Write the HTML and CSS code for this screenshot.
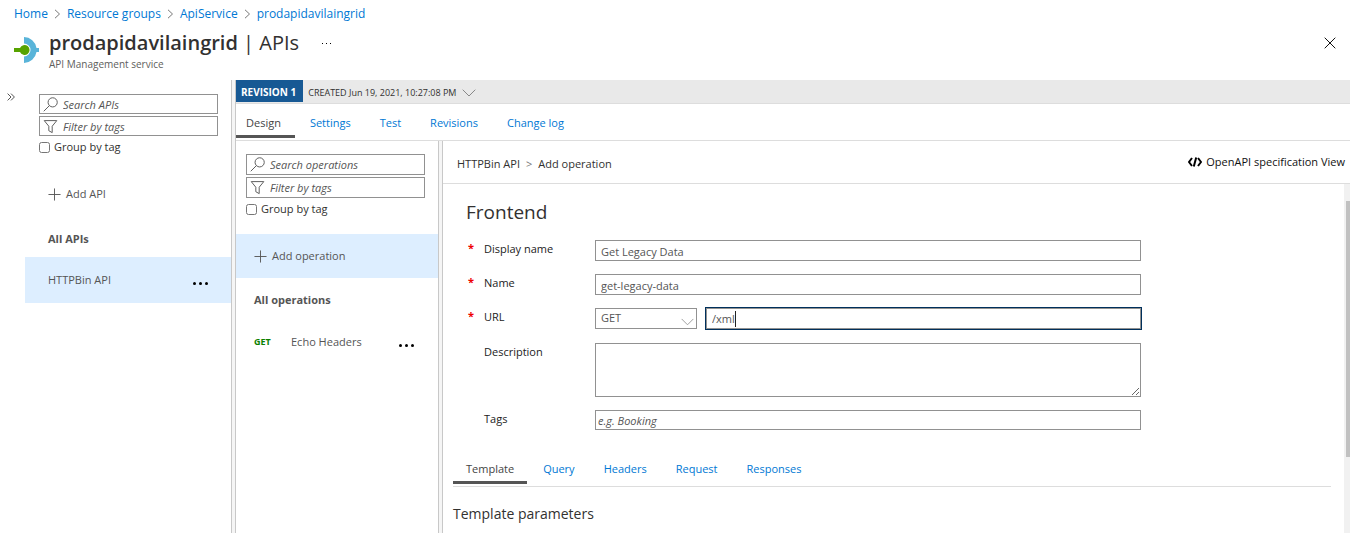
FILE: index.html
```html
<!DOCTYPE html>
<html lang="en">
<head>
<meta charset="utf-8">
<title>prodapidavilaingrid | APIs</title>
<link rel="stylesheet" href="styles.css">
</head>
<body>
<svg class="defs" aria-hidden="true">
  <symbol id="search" viewBox="0 0 16 16"><circle cx="10.300" cy="5.700" r="4.900"/><path d="M6.800 9.200.8 15.200"/></symbol>
  <symbol id="filter" viewBox="0 0 16 16"><path d="M1.300 1.700h13.400L9.800 7.700v6.800L6.200 12.500V7.700z"/></symbol>
  <symbol id="plus" viewBox="0 0 14 14"><path d="M7 .5v13M.5 7h13"/></symbol>
  <symbol id="chevron" viewBox="0 0 14 8"><path d="M.7.7 7 7 13.300.7"/></symbol>
  <symbol id="sep" viewBox="0 0 7 10"><path d="M1 .8 5.500 5 1 9.200"/></symbol>
</svg>
<header class="header">
  <nav class="crumbs" aria-label="Breadcrumb">
    <a href="#">Home</a><svg class="sep"><use href="#sep"/></svg>
    <a href="#">Resource groups</a><svg class="sep"><use href="#sep"/></svg>
    <a href="#">ApiService</a><svg class="sep"><use href="#sep"/></svg>
    <a href="#">prodapidavilaingrid</a>
  </nav>
  <div class="title-row">
    <svg class="logo" viewBox="0 0 26 28"><path d="M10 1a13 13 0 0 1 12.500 11H25v4h-2.500A13 13 0 0 1 10 27v-6.500a6.500 6.500 0 0 0 0-13z" fill="#59b4d9"/><path d="M0 12h6a5 5 0 1 1 0 4H0z" fill="#57a300"/></svg>
    <div class="heading">
      <h1 class="title"><strong>prodapidavilaingrid</strong> | APIs</h1>
      <p class="subtitle">API Management service</p>
    </div>
    <button class="more-title" aria-label="More"><span class="dots small"><i></i><i></i><i></i></span></button>
    <button class="close" aria-label="Close"><svg viewBox="0 0 12 12"><path d="M.7.7l10.600 10.600M11.300.7.7 11.300"/></svg></button>
  </div>
</header>
<div class="body">
  <button class="expand" aria-label="Expand menu"><svg viewBox="0 0 8 8"><path d="M.6.6 4 4 .6 7.400M4 .6 7.400 4 4 7.400"/></svg></button>
  <aside class="apis">
    <div class="filters">
      <label class="box"><svg><use href="#search"/></svg><input type="text" placeholder="Search APIs" aria-label="Search APIs"></label>
      <label class="box"><svg><use href="#filter"/></svg><input type="text" placeholder="Filter by tags" aria-label="Filter by tags"></label>
      <label class="check"><input type="checkbox">Group by tag</label>
    </div>
    <button class="row add"><svg><use href="#plus"/></svg>Add API</button>
    <h2 class="row group">All APIs</h2>
    <div class="row selected"><a href="#">HTTPBin API</a><button aria-label="API actions"><span class="dots"><i></i><i></i><i></i></span></button></div>
  </aside>
  <div class="splitter"></div>
  <main class="main">
    <div class="revision"><span class="badge">REVISION 1</span><button class="created">CREATED Jun 19, 2021, 10:27:08 PM<svg><use href="#chevron"/></svg></button></div>
    <nav class="tabs">
      <a class="tab active" href="#">Design</a><a class="tab" href="#">Settings</a><a class="tab" href="#">Test</a><a class="tab" href="#">Revisions</a><a class="tab" href="#">Change log</a>
    </nav>
    <div class="work">
      <aside class="operations">
        <div class="filters">
          <label class="box"><svg><use href="#search"/></svg><input type="text" placeholder="Search operations" aria-label="Search operations"></label>
          <label class="box"><svg><use href="#filter"/></svg><input type="text" placeholder="Filter by tags" aria-label="Filter operations by tags"></label>
          <label class="check"><input type="checkbox">Group by tag</label>
        </div>
        <button class="row add current"><svg><use href="#plus"/></svg>Add operation</button>
        <h2 class="row group">All operations</h2>
        <div class="row operation"><span class="verb">GET</span><a href="#">Echo Headers</a><button aria-label="Operation actions"><span class="dots"><i></i><i></i><i></i></span></button></div>
      </aside>
      <div class="splitter"></div>
      <section class="editor">
        <div class="editor-head">
          <div class="path"><a href="#">HTTPBin API</a><span class="gt">&gt;</span><span>Add operation</span></div>
          <button class="openapi"><svg viewBox="0 0 14 10"><path d="M4 1 1 5l3 4M10 1l3 4-3 4M8.200.5 5.800 9.500"/></svg>OpenAPI specification View</button>
        </div>
        <div class="scroll">
          <div class="content">
            <h2 class="section">Frontend</h2>
            <form class="form">
              <span class="req">*</span><label for="display">Display name</label><input class="field" id="display" type="text" value="Get Legacy Data">
              <span class="req">*</span><label for="name">Name</label><input class="field" id="name" type="text" value="get-legacy-data">
              <span class="req">*</span><label for="url">URL</label>
              <div class="url">
                <div class="method"><select class="field" aria-label="Method"><option>GET</option></select><svg><use href="#chevron"/></svg></div>
                <div class="field focused"><input id="url" type="text" value="/xml"><span class="caret"></span></div>
              </div>
              <span></span><label for="description">Description</label><textarea class="field area" id="description"></textarea>
              <span></span><label for="tags">Tags</label><input class="field tags" id="tags" type="text" placeholder="e.g. Booking">
            </form>
            <nav class="tabs inner">
              <a class="tab active" href="#">Template</a><a class="tab" href="#">Query</a><a class="tab" href="#">Headers</a><a class="tab" href="#">Request</a><a class="tab" href="#">Responses</a>
            </nav>
            <h3 class="params">Template parameters</h3>
          </div>
          <div class="track"><div class="thumb"></div></div>
        </div>
      </section>
    </div>
  </main>
</div>
</body>
</html>
```
FILE: styles.css
```css
* { box-sizing: border-box; }
html, body { height: 100%; }
body {
  margin: 0;
  display: flex;
  flex-direction: column;
  overflow: hidden;
  background: #fff;
  color: #323130;
  font: 11px/16px "Open Sans", "Noto Sans", sans-serif;
}
h1, h2, h3, p { margin: 0; font-weight: 400; }
a { color: #0078d4; text-decoration: none; }
button { border: 0; padding: 0; background: none; color: inherit; font: inherit; text-align: left; }
input, select, textarea { font: inherit; color: #555; }
svg { fill: none; stroke: #555; flex: none; }
.defs { position: absolute; width: 0; height: 0; }

.header { flex: none; height: 80px; padding: 6px 14px 0; }
.crumbs { display: flex; align-items: center; font-size: 12px; }
.sep { width: 7px; height: 10px; margin: 0 6px; stroke: #777; }
.title-row { display: flex; padding-top: 7px; }
.logo { width: 26px; height: 28px; margin: 7px 9px 0 0; stroke: none; }
.title { font-size: 20px; line-height: 28px; }
.title strong { font-weight: 600; }
.subtitle { color: #605e5c; font-size: 10px; line-height: 14px; }
.more-title { align-self: flex-start; margin: 14px 0 0 23px; display: flex; }
.close { align-self: flex-start; margin: 8px 0 0 auto; }
.close svg { display: block; width: 12px; height: 12px; stroke: #111; }

.dots { display: flex; gap: 3px; }
.dots i { width: 3px; height: 3px; border-radius: 50%; background: #000; }
.dots.small i { width: 1px; height: 1px; border-radius: 0; }

.body { flex: 1; min-height: 0; display: flex; }
.expand { align-self: flex-start; width: 25px; padding: 13px 0 0 7px; }
.expand svg { display: block; width: 8px; height: 8px; }
.apis { flex: none; width: 206px; }
.splitter { flex: none; width: 5px; border: solid #c8c8c8; border-width: 0 1px; background: #f5f5f5; }
.filters { display: flex; flex-direction: column; gap: 2px; padding: 14px 13px 0 14px; }
.box { display: flex; align-items: center; height: 20px; border: 1px solid #919191; padding-left: 3px; }
.box svg { width: 15px; height: 15px; }
.box input { flex: 1; min-width: 0; border: 0; outline: 0; padding: 1px 0 0 5px; background: none; }
input::placeholder { color: #555; font-style: italic; opacity: 1; }
.check { display: flex; align-items: center; gap: 4px; line-height: 18px; }
.check input { width: 11px; height: 11px; margin: 0; }
.row { display: flex; align-items: center; width: 100%; height: 46px; padding: 0 23px; color: #555; font-size: 11px; }
.row a { color: inherit; }
.add { gap: 5px; margin-top: 15px; }
.add svg { width: 13px; height: 13px; }
.group { font-weight: 700; height: 44px; }
.apis .group { height: 40px; padding-top: 4px; }
.selected { background: #def; }
.row button { margin: 7px 0 0 auto; }

.main { flex: 1; min-width: 0; display: flex; flex-direction: column; }
.revision { flex: none; display: flex; height: 24px; background: #e9e9e9; border-bottom: 1px solid #ddd; font-size: 10px; }
.badge { display: flex; align-items: center; height: 22px; padding: 2px 7px 0 5px; background: #175994; color: #fff; font-weight: 700; }
.created { display: flex; align-items: center; gap: 6px; padding: 2px 0 0 5px; font-size: 9px; }
.created svg { width: 14px; height: 8px; stroke: #888; }
.tabs { flex: none; display: flex; gap: 5px; height: 37px; border-bottom: 1px solid #ddd; }
.tab { display: flex; align-items: center; height: 34px; padding: 3px 14px 0 10px; }
.inner .tab { padding: 3px 13px 0; }
.tabs .active { padding-top: 6px; color: #444; border-bottom: 3px solid #555; }
.work { flex: 1; min-height: 0; display: flex; }
.operations { flex: none; width: 202px; }
.operations .filters { padding: 13px 13px 0 10px; }
.operations .box { height: 21px; }
.operations .row { padding: 0 24px 0 18px; }
.operations .add { height: 44px; margin-top: 16px; }
.current { background: #def; }
.operation { height: 40px; }
.verb { width: 37px; color: #0a8000; font-size: 9px; font-weight: 700; }

.editor { flex: 1; min-width: 0; display: flex; flex-direction: column; }
.editor-head { flex: none; display: flex; justify-content: space-between; height: 43px; padding: 15px 5px 0 14px; border-bottom: 1px solid #ddd; }
.path a { color: inherit; }
.gt { margin: 0 6px; color: #777; }
.openapi { display: flex; align-items: center; gap: 4px; height: 12px; color: #111; }
.openapi svg { width: 14px; height: 10px; stroke: #000; stroke-width: 2; }
.scroll { flex: 1; min-height: 0; display: flex; }
.content { flex: 1; min-width: 0; padding: 14px 13px 0 10px; }
.section { padding-left: 13px; font-size: 19px; line-height: 28px; }
.form {
  display: grid;
  grid-template-columns: 16px 111px minmax(0, 546px);
  row-gap: 13px;
  padding: 14px 0 0 15px;
}
.form label { padding-top: 1px; color: #222; }
.req { color: #e00; font-weight: 700; }
.field { width: 100%; height: 21px; border: 1px solid #919191; border-radius: 0; outline: 0; padding: 1px 5px 0; background: #fff; }
.url { display: flex; gap: 9px; height: 22px; }
.method { position: relative; flex: none; width: 102px; }
.method select { appearance: none; display: block; padding: 0 5px 1px; }
.method svg { position: absolute; right: 3px; bottom: 4px; width: 13px; height: 8px; stroke: #999; }
.focused { flex: 1; display: flex; align-items: center; box-shadow: 0 0 0 1px #00305c; }
.focused input { field-sizing: content; border: 0; outline: 0; padding: 0; }
.caret { width: 1px; height: 16px; background: #222; }
.area { display: block; height: 54px; resize: vertical; }
.tags { height: 20px; padding: 0 2px; }
.inner { margin-top: 20px; gap: 3px; }
.params { padding-top: 17px; font-size: 14px; line-height: 20px; }
.track { flex: none; width: 6px; padding: 17px 0 0 2px; background: #f1f1f1; }
.thumb { height: 77%; background: #c1c1c1; }
```
